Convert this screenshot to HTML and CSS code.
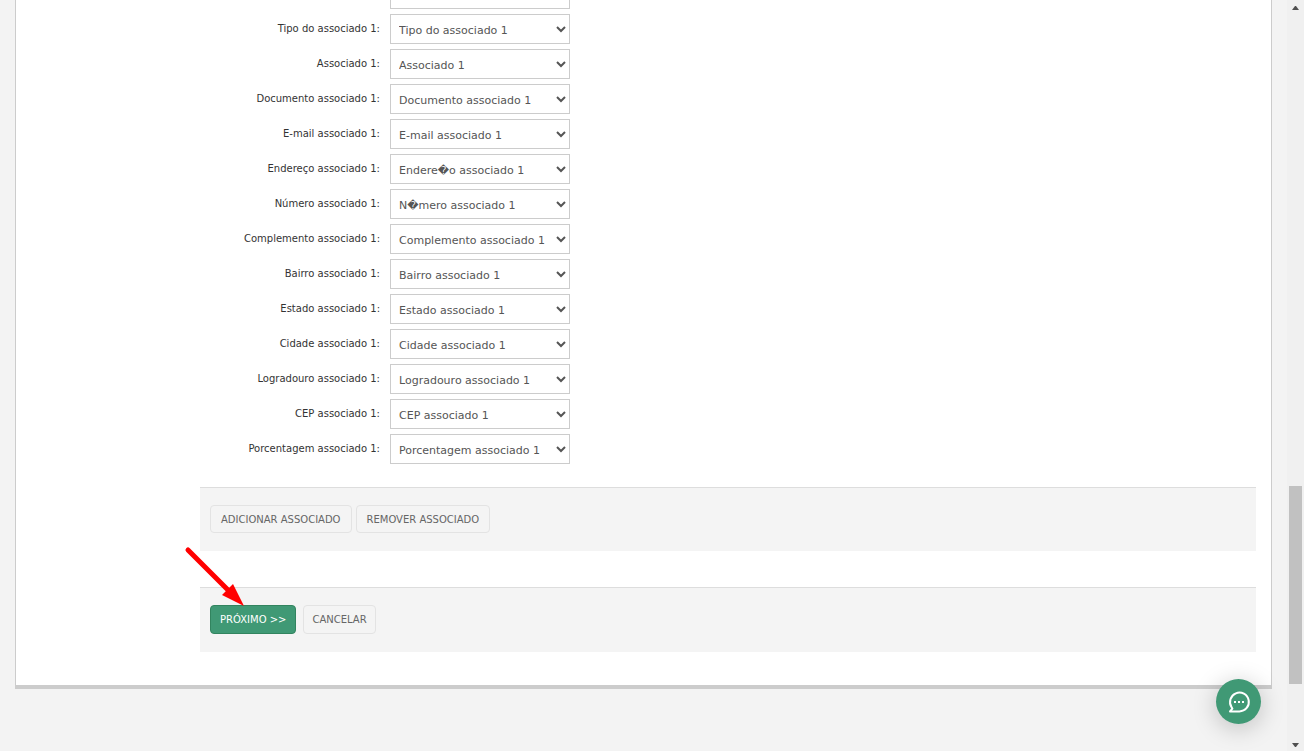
FILE: index.html
```
<!DOCTYPE html>
<html lang="pt-BR">
<head>
<meta charset="utf-8">
<title>Importação de associados</title>
<link rel="stylesheet" href="styles.css">
</head>
<body>
<main class="page">
  <form class="panel">
    <div class="fields">
      <div class="row"><label for="f0"></label><select id="f0"><option></option></select></div>
      <div class="row"><label for="f1">Tipo do associado 1:</label><select id="f1"><option>Tipo do associado 1</option></select></div>
      <div class="row"><label for="f2">Associado 1:</label><select id="f2"><option>Associado 1</option></select></div>
      <div class="row"><label for="f3">Documento associado 1:</label><select id="f3"><option>Documento associado 1</option></select></div>
      <div class="row"><label for="f4">E-mail associado 1:</label><select id="f4"><option>E-mail associado 1</option></select></div>
      <div class="row"><label for="f5">Endereço associado 1:</label><select id="f5"><option>Endere&#xFFFD;o associado 1</option></select></div>
      <div class="row"><label for="f6">Número associado 1:</label><select id="f6"><option>N&#xFFFD;mero associado 1</option></select></div>
      <div class="row"><label for="f7">Complemento associado 1:</label><select id="f7"><option>Complemento associado 1</option></select></div>
      <div class="row"><label for="f8">Bairro associado 1:</label><select id="f8"><option>Bairro associado 1</option></select></div>
      <div class="row"><label for="f9">Estado associado 1:</label><select id="f9"><option>Estado associado 1</option></select></div>
      <div class="row"><label for="f10">Cidade associado 1:</label><select id="f10"><option>Cidade associado 1</option></select></div>
      <div class="row"><label for="f11">Logradouro associado 1:</label><select id="f11"><option>Logradouro associado 1</option></select></div>
      <div class="row"><label for="f12">CEP associado 1:</label><select id="f12"><option>CEP associado 1</option></select></div>
      <div class="row"><label for="f13">Porcentagem associado 1:</label><select id="f13"><option>Porcentagem associado 1</option></select></div>
    </div>
    <div class="bar bar-members">
      <button type="button" class="btn">ADICIONAR ASSOCIADO</button>
      <button type="button" class="btn">REMOVER ASSOCIADO</button>
    </div>
    <div class="bar bar-submit">
      <button type="submit" class="btn btn-primary">PRÓXIMO &gt;&gt;
        <svg class="pointer" width="60" height="60" viewBox="0 0 60 60" aria-hidden="true"><path d="M4 4L45 45" stroke="#f00" stroke-width="5" stroke-linecap="round"/><path d="M60 60L38 49L49 38Z" fill="#f00"/></svg>
      </button>
      <button type="button" class="btn">CANCELAR</button>
    </div>
  </form>
</main>
<div class="scrollbar" aria-hidden="true">
  <svg width="7" height="4" viewBox="0 0 7 4"><path d="M0 4L3 0H4L7 4Z" fill="#505050"/></svg>
  <div class="track"><div class="thumb"></div></div>
  <svg width="7" height="4" viewBox="0 0 7 4"><path d="M0 0L3 4H4L7 0Z" fill="#505050"/></svg>
</div>
<button type="button" class="chat" aria-label="Chat">
  <svg width="24" height="24" viewBox="0 0 24 24" fill="none"><path d="M4.6 17.2A9.4 9.4 0 1 1 12.4 21.4H3L5.4 18.7Z" stroke="#fff" stroke-width="2" stroke-linejoin="round"/><path d="M7 11h2v2H7zM11 11h2v2h-2zM15 11h2v2h-2z" fill="#fff"/></svg>
</button>
</body>
</html>
```
FILE: styles.css
```
* {
  box-sizing: border-box;
}

body {
  margin: 0;
  display: flex;
  height: 100vh;
  overflow: hidden;
  background: #f3f3f3;
  color: #333;
  font-family: Verdana, "DejaVu Sans", sans-serif;
  font-size: 10px;
}

/* The page is shown scrolled to its end */
.page {
  flex: 1;
  display: flex;
  flex-direction: column;
  justify-content: flex-end;
  padding: 0 15px 62px;
}

.panel {
  flex: none;
  padding: 0 15px 33px 184px;
  background: #fff;
  border: 1px solid #ccc;
  border-bottom-width: 4px;
}

.fields {
  display: flex;
  flex-direction: column;
  gap: 5px;
}

.row {
  display: grid;
  grid-template-columns: 180px 180px;
  column-gap: 10px;
  align-items: center;
}

.row label {
  padding-bottom: 2px;
  text-align: right;
}

.row select {
  height: 30px;
  padding: 2px 5px 0 4px;
  border: 1px solid #ccc;
  border-radius: 0;
  background: #fff;
  color: #555;
  font-family: inherit;
  font-size: 11px;
}

.bar {
  display: flex;
  padding: 17px 10px 18px;
  border-top: 1px solid #ddd;
  background: #f4f4f4;
}

.bar-members {
  gap: 4px;
  height: 64px;
  margin-top: 23px;
}

.bar-submit {
  gap: 7px;
  height: 65px;
  margin-top: 36px;
}

.btn {
  position: relative;
  padding: 0 8px;
  border: 1px solid #e3e3e3;
  border-radius: 4px;
  background: #f4f4f4;
  color: #666;
  font-family: inherit;
  font-size: 10px;
  white-space: nowrap;
}

.bar-members .btn {
  padding: 0 10px;
}

.bar-submit .btn-primary {
  padding: 0 9px;
  border-color: #32845f;
  background: #409975;
  color: #fff;
}

.pointer {
  position: absolute;
  right: 51px;
  bottom: 27px;
  pointer-events: none;
}

.scrollbar {
  flex: none;
  display: flex;
  flex-direction: column;
  align-items: center;
  width: 17px;
  padding: 6px 0 4px;
  background: #f0f0f0;
}

.track {
  flex: 1;
  display: flex;
  flex-direction: column;
  justify-content: flex-end;
  padding: 7px 0 59px;
}

.thumb {
  width: 13px;
  height: 198px;
  background: #c1c1c1;
}

.chat {
  position: fixed;
  right: 43px;
  bottom: 27px;
  display: flex;
  align-items: center;
  justify-content: center;
  width: 45px;
  height: 45px;
  padding: 0;
  border: 0;
  border-radius: 50%;
  background: #409975;
  box-shadow: 0 4px 24px rgba(0, 0, 0, 0.22);
}
```
